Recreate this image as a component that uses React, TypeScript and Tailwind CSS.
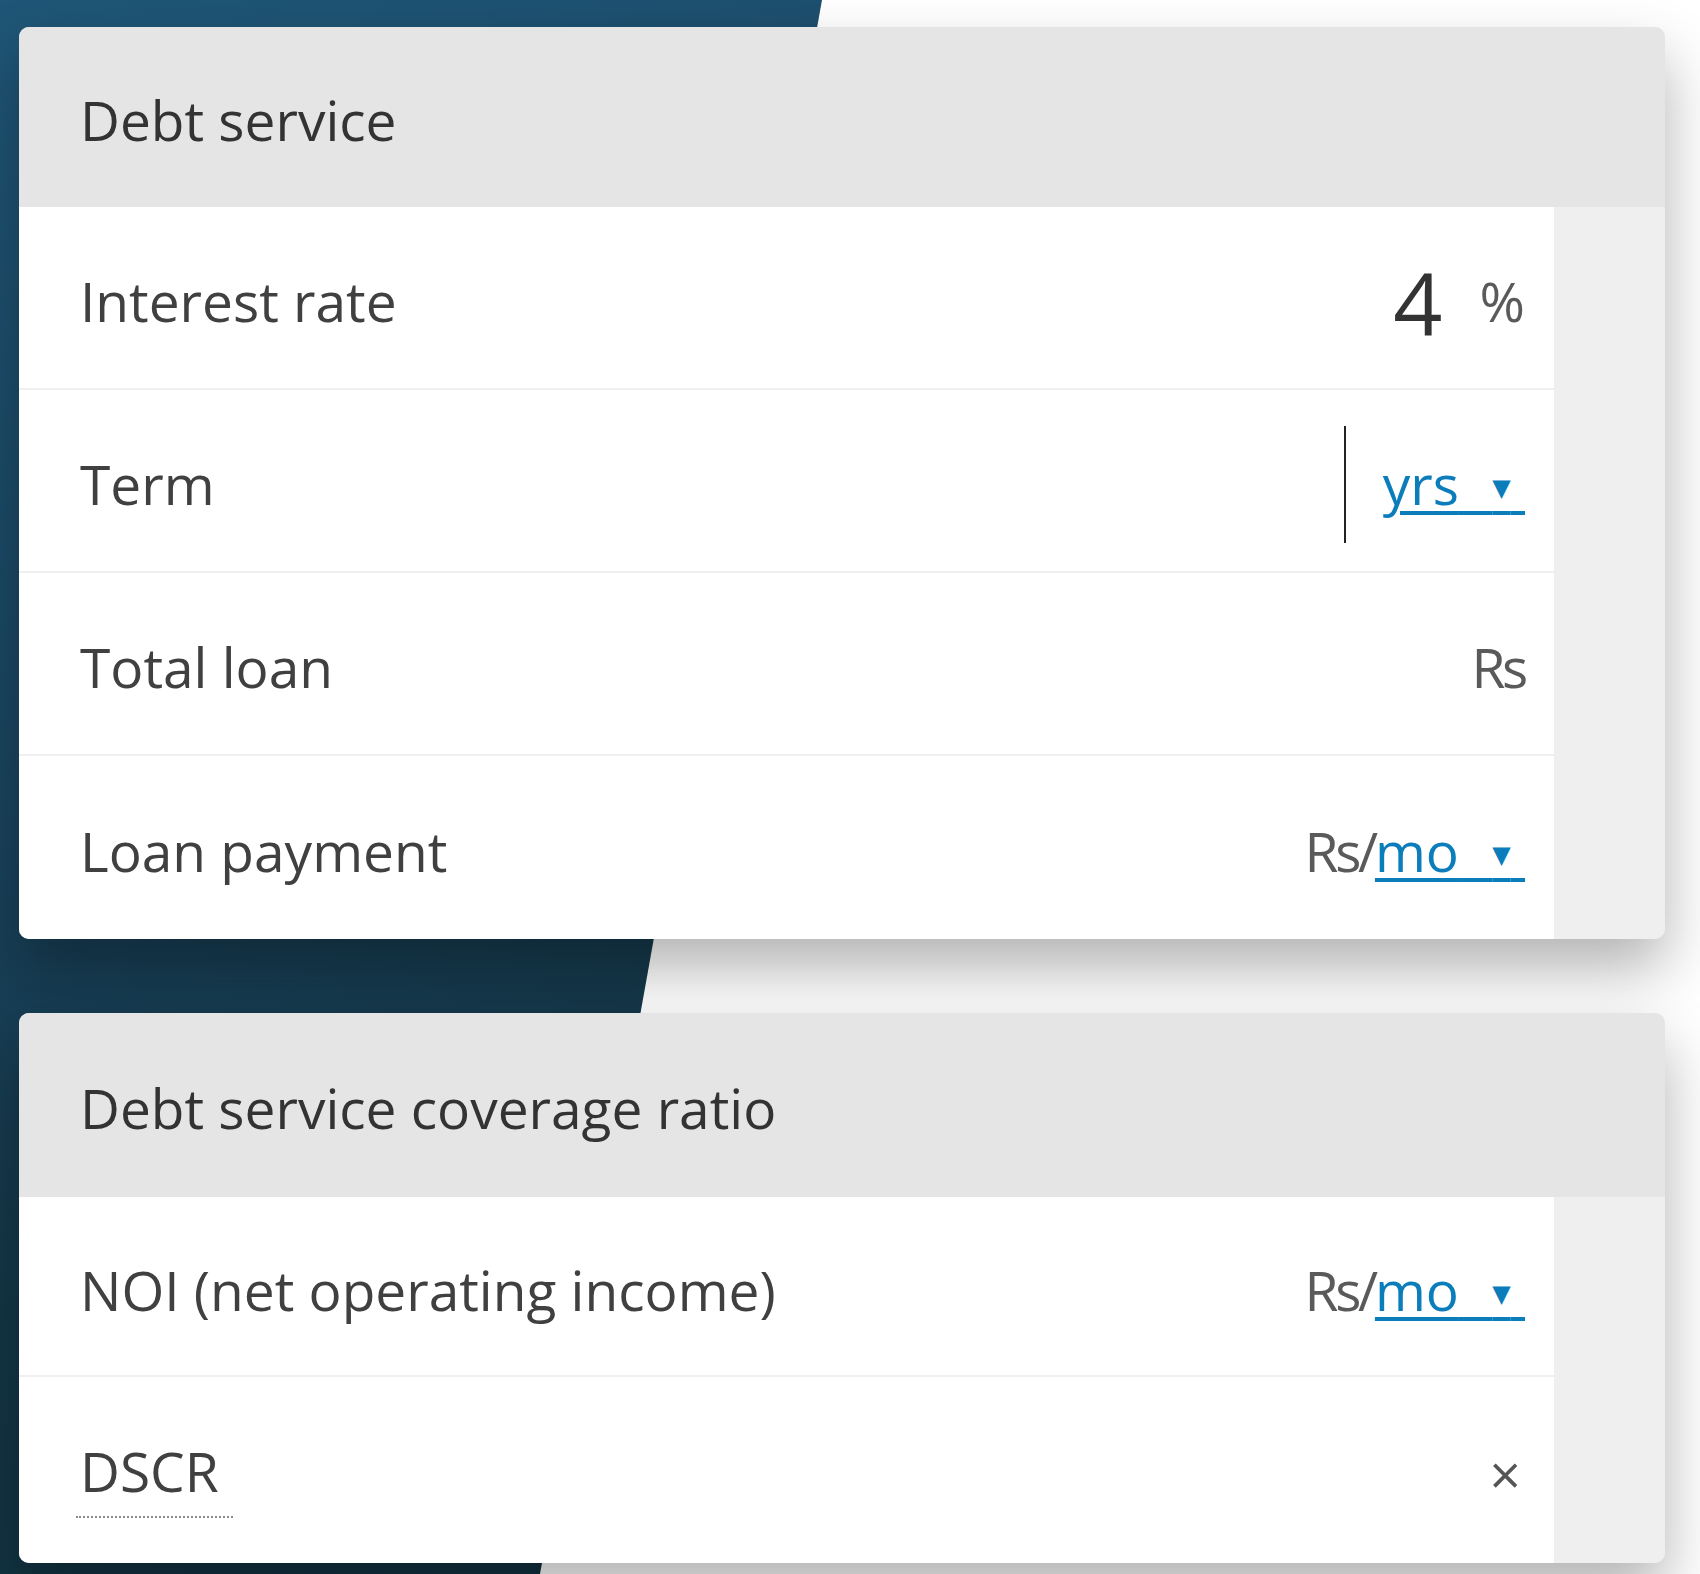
import React from "react";

function Unit({ text }: { text: string }) {
  return (
    <span className="underline decoration-[#0b7dbb] decoration-[4px] underline-offset-[6px] text-[#0b7dbb]">
      {text}
      <span className="[word-spacing:19px]">{"\u00a0"}</span>
      <span className="font-['DejaVu_Sans',sans-serif] text-[24px] align-[9px]">▼</span>
      {"\u00a0"}
    </span>
  );
}

function Row({
  h,
  border = true,
  children,
}: {
  h: string;
  border?: boolean;
  children: React.ReactNode;
}) {
  return (
    <div className="flex">
      <div
        className={`${h} w-[1535px] bg-white flex items-center justify-between pl-[61px] pr-[29px] pt-[8px] ${
          border ? "border-b-2 border-[#efefef]" : ""
        }`}
      >
        {children}
      </div>
    </div>
  );
}

export default function App() {
  return (
    <div className="relative w-[1700px] min-h-[1574px] bg-white overflow-hidden font-['Open_Sans',sans-serif]">
      <div className="absolute inset-0 [clip-path:polygon(0_0,822px_0,540px_100%,0_100%)] bg-[linear-gradient(160deg,#1f5677_0%,#1a4560_35%,#143646_60%,#0f2c3a_100%)]" />
      <div className="relative pl-[19px] pt-[27px] flex flex-col gap-[74px]">
        {/* Card 1 */}
        <div className="w-[1646px] rounded-[10px] overflow-hidden bg-[#efefef] shadow-[0_30px_60px_rgba(0,0,0,0.3)]">
          <div className="h-[180px] bg-[#e5e5e5] flex items-center pl-[61px] pt-[6px] text-[55px] text-[#333]">
            Debt service
          </div>
          <Row h="h-[183px]">
            <span className="text-[55px] text-[#404040]">Interest rate</span>
            <div className="flex items-center gap-[37px]">
              <span className="text-[86px] text-[#333] leading-normal">4</span>
              <span className="text-[55px] text-[#5a5a5a]">%</span>
            </div>
          </Row>
          <Row h="h-[183px]">
            <span className="text-[55px] text-[#404040]">Term</span>
            <div className="flex items-center gap-[37px]">
              <span className="w-[2px] h-[117px] bg-[#222]" />
              <span className="text-[55px]">
                <Unit text="yrs" />
              </span>
            </div>
          </Row>
          <Row h="h-[183px]">
            <span className="text-[55px] text-[#404040]">Total loan</span>
            <span className="text-[55px] text-[#5a5a5a] tracking-[-0.06em]">Rs</span>
          </Row>
          <Row h="h-[183px]" border={false}>
            <span className="text-[55px] text-[#404040]">Loan payment</span>
            <span className="text-[55px] text-[#5a5a5a]">
              <span className="tracking-[-0.06em]">Rs/</span>
              <Unit text="mo" />
            </span>
          </Row>
        </div>

        {/* Card 2 */}
        <div className="w-[1646px] rounded-[10px] overflow-hidden bg-[#efefef] shadow-[0_30px_60px_rgba(0,0,0,0.3)]">
          <div className="h-[184px] bg-[#e5e5e5] flex items-center pl-[61px] pt-[6px] text-[55px] text-[#333]">
            Debt service coverage ratio
          </div>
          <Row h="h-[180px]">
            <span className="text-[55px] text-[#404040]">NOI (net operating income)</span>
            <span className="text-[55px] text-[#5a5a5a]">
              <span className="tracking-[-0.06em]">Rs/</span>
              <Unit text="mo" />
            </span>
          </Row>
          <Row h="h-[186px]" border={false}>
            <span className="inline-block text-[55px] text-[#404040] -ml-[4px] pl-[4px] pr-[14px] pb-[3px] border-b-2 border-dotted border-[#8a8a8a] leading-normal">
              DSCR
            </span>
            <span className="text-[55px] text-[#555] pr-[4px]">×</span>
          </Row>
        </div>
      </div>
    </div>
  );
}
